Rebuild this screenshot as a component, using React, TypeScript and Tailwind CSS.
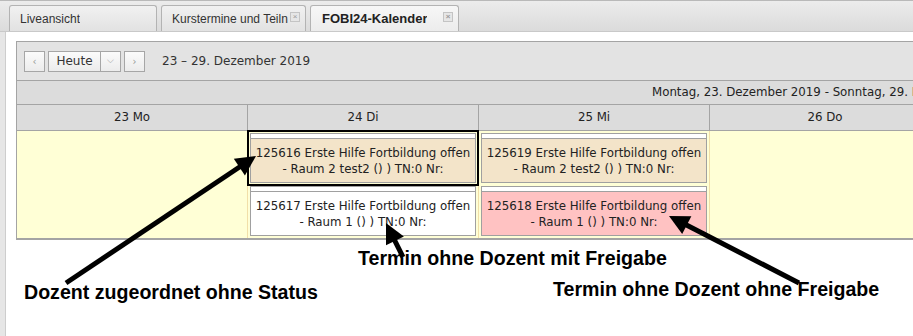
import React from 'react';

type Tab = { label: string; active?: boolean; closable?: boolean; width: string };

const tabs: Tab[] = [
  { label: 'Liveansicht', width: 'w-[148px]' },
  { label: 'Kurstermine und Teiln', closable: true, width: 'w-[145px]' },
  { label: 'FOBI24-Kalender', active: true, closable: true, width: 'w-[149px]' },
];

type CalEvent = { id: string; room: string; tone: 'tan' | 'white' | 'pink'; selected?: boolean };

const columns: { label: string; events: CalEvent[] }[] = [
  { label: '23 Mo', events: [] },
  {
    label: '24 Di',
    events: [
      { id: '125616', room: '- Raum 2 test2 () ) TN:0 Nr:', tone: 'tan', selected: true },
      { id: '125617', room: '- Raum 1 () ) TN:0 Nr:', tone: 'white' },
    ],
  },
  {
    label: '25 Mi',
    events: [
      { id: '125619', room: '- Raum 2 test2 () ) TN:0 Nr:', tone: 'tan' },
      { id: '125618', room: '- Raum 1 () ) TN:0 Nr:', tone: 'pink' },
    ],
  },
  { label: '26 Do', events: [] },
  { label: '27 Fr', events: [] },
];

const toneBg = {
  tan: 'bg-[#f3e4c9]',
  white: 'bg-white',
  pink: 'bg-[#ffc2c2]',
};

// arrow from tail to tip, with a filled head
function Arrow({ tail, tip }: { tail: [number, number]; tip: [number, number] }) {
  const dx = tip[0] - tail[0];
  const dy = tip[1] - tail[1];
  const len = Math.hypot(dx, dy);
  const ux = dx / len;
  const uy = dy / len;
  const L = 20;
  const W = 10;
  const bx = tip[0] - ux * L;
  const by = tip[1] - uy * L;
  const pts = `${tip[0]},${tip[1]} ${bx - uy * W},${by + ux * W} ${bx + uy * W},${by - ux * W}`;
  return (
    <g>
      <line x1={tail[0]} y1={tail[1]} x2={bx + ux * 2} y2={by + uy * 2} stroke="#000" strokeWidth={5} />
      <polygon points={pts} fill="#000" />
    </g>
  );
}

function NavButton({ children, className = '' }: { children: React.ReactNode; className?: string }) {
  return (
    <div
      className={`h-[21px] flex items-center justify-center border border-[#a6a6a6] bg-gradient-to-b from-[#fbfbfb] to-[#ececec] text-[#333] ${className}`}
    >
      {children}
    </div>
  );
}

export default function App() {
  return (
    <div className="relative w-[913px] h-[336px] overflow-hidden bg-white flex flex-col font-['DejaVu_Sans',sans-serif]">
      {/* tab bar */}
      <div className="h-[32px] shrink-0 border-t border-b border-t-[#b9b9b9] border-b-[#c9c9c9] bg-gradient-to-b from-[#ececec] to-[#dbdbdb] flex items-end pl-[9px] gap-[4px]">
        {tabs.map((t) => (
          <div
            key={t.label}
            className={`${t.width} h-[26px] flex items-center justify-between rounded-t-[3px] border border-b-0 border-[#b3b3b3] font-['Liberation_Sans',Arial,sans-serif] ${
              t.active
                ? 'bg-gradient-to-b from-[#f7f7f7] to-[#ececec] text-[13px] font-bold text-[#222] pl-[11px] pr-[5px]'
                : 'bg-gradient-to-b from-[#f1f1f1] to-[#e2e2e2] text-[12px] text-[#333] pl-[10px] pr-[5px]'
            }`}
          >
            <span className="whitespace-nowrap overflow-hidden">{t.label}</span>
            {t.closable && (
              <span className="w-[10px] h-[10px] mb-[4px] flex items-center justify-center border border-[#c4c4c4] bg-[#e6e6e6] text-[#9a9a9a] text-[8px] leading-none">
                ×
              </span>
            )}
          </div>
        ))}
      </div>

      <div className="flex flex-1 min-h-0">
        <div className="w-[6px] shrink-0 bg-[#e6e6e6] border-r border-[#cdcdcd]" />
        <div className="flex-1 pt-[9px] pl-[10px] overflow-hidden">
          {/* calendar panel */}
          <div className="w-[1180px] border border-r-0 border-[#a4a4a4] text-[11.8px] text-[#222]">
            <div className="h-[39px] bg-[#e3e3e3] border-b border-[#a4a4a4] flex items-center pl-[7px]">
              <NavButton className="w-[21px] text-[#999] text-[10px]">‹</NavButton>
              <NavButton className="w-[53px] ml-[3px] text-[12px]">Heute</NavButton>
              <NavButton className="w-[20px] border-l-0 text-[#999] text-[9px]">⌵</NavButton>
              <NavButton className="w-[21px] ml-[3px] text-[#999] text-[10px]">›</NavButton>
              <span className="ml-[17px] text-[12px] text-[#333]">23 – 29. Dezember 2019</span>
            </div>
            <div className="h-[24px] bg-[#dcdcdc] border-b border-[#a4a4a4] flex items-center pl-[635px] whitespace-nowrap">
              Montag, 23. Dezember 2019 - Sonntag, 29. Dezember 2019
            </div>
            <div className="flex bg-[#dcdcdc] border-b border-[#a4a4a4]">
              {columns.map((c) => (
                <div key={c.label} className="w-[231px] shrink-0 h-[25px] flex items-center justify-center border-r border-[#a4a4a4]">
                  {c.label}
                </div>
              ))}
            </div>
            <div className="flex border-b border-[#a4a4a4]">
              {columns.map((c) => (
                <div
                  key={c.label}
                  className="w-[231px] shrink-0 h-[107px] bg-[#ffffd6] border-r border-[#f1dfa8] flex flex-col gap-[3px] pt-[2px] px-[2px]"
                >
                  {c.events.map((e) => (
                    <div
                      key={e.id}
                      className={`h-[50px] w-[226px] flex flex-col border border-[#a0a0a0] ${toneBg[e.tone]} ${
                        e.selected ? 'outline-2 outline-solid outline-black outline-offset-1' : ''
                      }`}
                    >
                      <div className="h-[5px] bg-white border-b border-[#a0a0a0]" />
                      <div className="pt-[6px] text-center leading-[16px] whitespace-nowrap">
                        <div>{e.id} Erste Hilfe Fortbildung offen</div>
                        <div>{e.room}</div>
                      </div>
                    </div>
                  ))}
                </div>
              ))}
            </div>
          </div>
        </div>
      </div>

      {/* annotations drawn over the screenshot */}
      <svg className="absolute inset-0 pointer-events-none" width={913} height={336}>
        <Arrow tail={[66, 283]} tip={[256, 156]} />
        <Arrow tail={[403, 257]} tip={[386, 223]} />
        <Arrow tail={[799, 283]} tip={[669, 216]} />
      </svg>
      <div className="absolute left-[358px] top-[244px] text-[19.6px] font-bold text-black font-['Liberation_Sans',Arial,sans-serif] whitespace-nowrap">
        Termin ohne Dozent mit Freigabe
      </div>
      <div className="absolute left-[24px] top-[278px] text-[19.6px] font-bold text-black font-['Liberation_Sans',Arial,sans-serif] whitespace-nowrap">
        Dozent zugeordnet ohne Status
      </div>
      <div className="absolute left-[553px] top-[275px] text-[19.6px] font-bold text-black font-['Liberation_Sans',Arial,sans-serif] whitespace-nowrap">
        Termin ohne Dozent ohne Freigabe
      </div>
    </div>
  );
}
